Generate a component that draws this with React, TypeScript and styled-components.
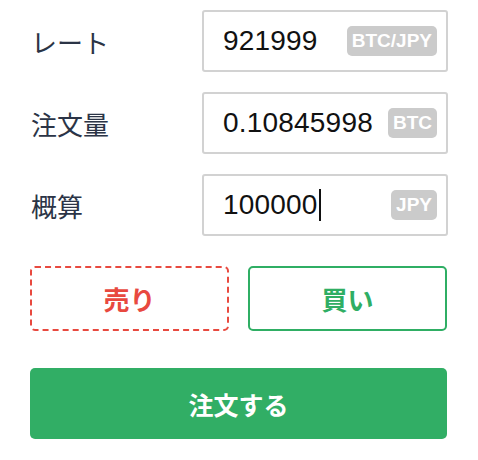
import React from "react";
import styled, { createGlobalStyle } from "styled-components";

const GlobalStyle = createGlobalStyle`
  body {
    margin: 0;
    background: #ffffff;
    font-family: "Liberation Sans", "Noto Sans CJK JP", sans-serif;
  }
`;

interface FieldRow {
  label: string;
  value: string;
  unit: string;
  focused?: boolean;
}

const rows: FieldRow[] = [
  { label: "レート", value: "921999", unit: "BTC/JPY" },
  { label: "注文量", value: "0.10845998", unit: "BTC" },
  { label: "概算", value: "100000", unit: "JPY", focused: true },
];

const App = () => {
  return (
    <>
      <GlobalStyle />
      <Form>
        {rows.map((row) => (
          <Row key={row.label}>
            <Label>{row.label}</Label>
            <Field>
              <Value>{row.value}</Value>
              {row.focused && <Caret />}
              <Unit>{row.unit}</Unit>
            </Field>
          </Row>
        ))}
        <SideRow>
          <SideButton $tone="sell">売り</SideButton>
          <SideButton $tone="buy">買い</SideButton>
        </SideRow>
        <SubmitButton>注文する</SubmitButton>
      </Form>
    </>
  );
};

export default App;

const Form = styled.div`
  width: 417px;
  padding: 10px 0 0 30px;
  display: flex;
  flex-direction: column;
`;

const Row = styled.div`
  display: grid;
  grid-template-columns: 172px 246px;
  align-items: center;
  margin-bottom: 20px;
`;

const Label = styled.div`
  font-family: "Noto Sans CJK JP", sans-serif;
  font-size: 26px;
  color: #2b3446;
  padding-left: 1px;
`;

const Field = styled.div`
  height: 62px;
  box-sizing: border-box;
  border: 2px solid #d2d2d2;
  border-radius: 3px;
  display: flex;
  align-items: center;
  padding: 0 9px 0 19px;
`;

const Value = styled.span`
  font-family: "Liberation Sans", sans-serif;
  font-size: 28px;
  color: #111111;
  letter-spacing: 0.2px;
`;

const Caret = styled.span`
  width: 2px;
  height: 32px;
  background: #111111;
  margin-left: 1px;
`;

const Unit = styled.span`
  margin-left: auto;
  height: 30px;
  line-height: 30px;
  padding: 0 5px;
  border-radius: 5px;
  background: #cbcbcb;
  color: #ffffff;
  font-family: "Liberation Sans", sans-serif;
  font-weight: bold;
  font-size: 19px;
`;

const SideRow = styled.div`
  display: grid;
  grid-template-columns: 1fr 1fr;
  gap: 19px;
  margin-top: 10px;
`;

const SideButton = styled.button<{ $tone: "sell" | "buy" }>`
  height: 65px;
  border-radius: 5px;
  background: #ffffff;
  border: 2px ${(p) => (p.$tone === "sell" ? "dashed #e8493f" : "solid #2fae64")};
  color: ${(p) => (p.$tone === "sell" ? "#e8493f" : "#2fae64")};
  font-family: "Noto Sans CJK JP", sans-serif;
  font-weight: bold;
  font-size: 26px;
  padding: 0;
`;

const SubmitButton = styled.button`
  margin-top: 37px;
  height: 71px;
  border: none;
  border-radius: 5px;
  background: #31ae65;
  color: #ffffff;
  font-family: "Noto Sans CJK JP", sans-serif;
  font-weight: bold;
  font-size: 25px;
  padding: 0;
`;
